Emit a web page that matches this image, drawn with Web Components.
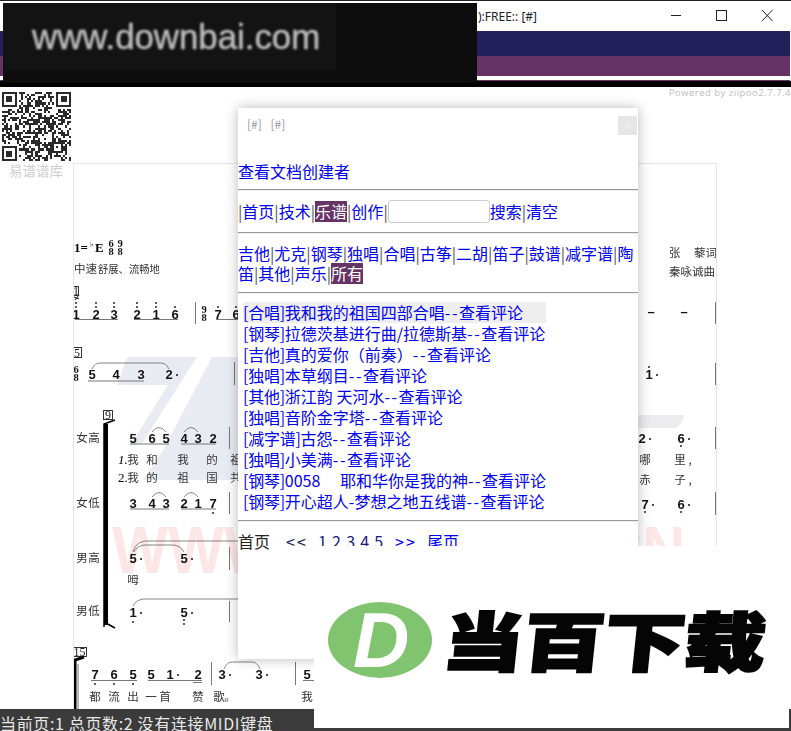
<!DOCTYPE html>
<html lang="zh">
<head>
<meta charset="utf-8">
<title>易谱</title>
<style>
  html,body{margin:0;padding:0;background:#fff;}
  body{font-family:"Noto Sans CJK SC","Noto Sans",sans-serif;}
</style>
</head>
<body>
<app-window>
  <song-dialog>
    <link-row style="height:21px;margin-bottom:7px" items="查看文档创建者"></link-row>
    <rule-line></rule-line>
    <link-row style="margin-top:10px;height:24px;margin-bottom:7px" items="|首页|技术|*乐谱|创作|@搜索|清空"><search-box></search-box></link-row>
    <rule-line></rule-line>
    <link-row style="margin-top:9px;height:40px;margin-bottom:9px" items="吉他|尤克|钢琴|独唱|合唱|古筝|二胡|笛子|鼓谱|减字谱|陶笛|其他|声乐|*所有"></link-row>
    <rule-line></rule-line>
    <song-list>
      <song-row kind="合唱" active>我和我的祖国四部合唱</song-row>
      <song-row kind="钢琴">拉德茨基进行曲/拉德斯基</song-row>
      <song-row kind="吉他">真的爱你（前奏）</song-row>
      <song-row kind="独唱">本草纲目</song-row>
      <song-row kind="其他">浙江韵 天河水</song-row>
      <song-row kind="独唱">音阶金字塔</song-row>
      <song-row kind="减字谱">古怨</song-row>
      <song-row kind="独唱">小美满</song-row>
      <song-row kind="钢琴">0058　&nbsp;耶和华你是我的神</song-row>
      <song-row kind="钢琴">开心超人-梦想之地五线谱</song-row>
    </song-list>
    <rule-line></rule-line>
    <pager-bar></pager-bar>
  </song-dialog>
</app-window>

<script>
const CJK = '"Noto Sans CJK SC","Noto Sans",sans-serif';

class TitleBar extends HTMLElement{
  constructor(){
    super();
    this.attachShadow({mode:"open"});
    this.shadowRoot.innerHTML = `
    <style>
      :host{display:flex;align-items:center;height:30px;border-top:1px solid #222;background:#fff;color:#222;
        font:12px "Noto Sans",sans-serif;padding-left:478px;box-sizing:content-box;}
      span{flex:1;}
      svg{display:block;margin-right:1px;}
    </style>
    <span>):FREE:: [#]</span>
    <svg width="120" height="30" viewBox="0 0 120 30" fill="none" stroke="#222" stroke-width="1">
      <path d="M1 14.5H11"/>
      <rect x="46.5" y="9.5" width="10" height="10"/>
      <path d="M92 9L102.500 20M102.500 9L92 20"/>
    </svg>`;
  }
}

class BlackBanner extends HTMLElement{
  constructor(){
    super();
    this.attachShadow({mode:"open"});
    this.shadowRoot.innerHTML = `
    <style>
      :host{position:absolute;left:3px;top:3px;width:474px;height:80px;background:#0d0d0d;overflow:hidden;}
      div{position:absolute;left:0;top:0;width:333px;height:68px;background:#131313;}
      span{position:absolute;left:29px;top:14px;font:34.800px/40px "Liberation Sans",sans-serif;color:#bdbdbd;-webkit-text-stroke:.5px #bdbdbd;filter:blur(.8px);white-space:nowrap;}
    </style>
    <div></div><span>www.downbai.com</span>`;
  }
}

class LogoBanner extends HTMLElement{
  constructor(){
    super();
    this.attachShadow({mode:"open"});
    this.shadowRoot.innerHTML = `
    <style>
      :host{position:absolute;left:314px;top:546px;width:475px;height:182px;background:#fff;}
      svg{display:block;}
    </style>
    <svg width="475" height="182" viewBox="314 546 475 182">
      <ellipse cx="380" cy="640" rx="52" ry="38" fill="#80c46f"/>
      <text x="353" y="667" font-family="Liberation Sans" font-weight="700" font-style="italic" font-size="78" fill="#fff">D</text>
      <text transform="translate(441 666) skewX(-6)" x="0" y="0" font-family='"Noto Sans CJK SC"' font-weight="900" font-size="64" fill="#050505" stroke="#050505" stroke-width="2.500" textLength="322" lengthAdjust="spacingAndGlyphs">当百下载</text>
    </svg>`;
  }
}

class QrCode extends HTMLElement{
  constructor(){
    super();
    this.attachShadow({mode:"open"});
    const size = 33;
    let cells = "";
    let seed = 7741;
    const next = () => { seed = (seed * 1103515245 + 12345) & 0x7fffffff; return (seed >> 16) & 1; };
    const inFinder = (x,y) => (x<8&&y<8)||(x>=size-8&&y<8)||(x<8&&y>=size-8);
    for(let y=0;y<size;y++){
      for(let x=0;x<size;x++){
        if(inFinder(x,y)) continue;
        if(x>=24&&x<=28&&y>=24&&y<=28) continue;
        if(next()) cells += `<rect x="${x}" y="${y}" width="1.020" height="1.020"/>`;
      }
    }
    const finder = (x,y) => `<path d="M${x} ${y}h7v7h-7zM${x+1} ${y+1}v5h5v-5z" fill-rule="evenodd"/><rect x="${x+2}" y="${y+2}" width="3" height="3"/>`;
    const align = `<path d="M24 24h5v5h-5zM25 25v3h3v-3z" fill-rule="evenodd"/><rect x="26" y="26" width="1" height="1"/>`;
    this.shadowRoot.innerHTML = `
    <style>
      :host{display:block;width:69px;height:69px;}
      svg{display:block;filter:blur(.25px);}
    </style>
    <svg width="69" height="69" viewBox="0 0 33 33" fill="#2a2a2a" shape-rendering="crispEdges">${cells}${finder(0,0)}${finder(26,0)}${finder(0,26)}${align}</svg>`;
  }
}

class SideColumn extends HTMLElement{
  constructor(){
    super();
    this.attachShadow({mode:"open"});
    this.shadowRoot.innerHTML = `
    <style>
      :host{display:block;flex:none;width:73px;box-sizing:border-box;padding:5px 0 0 2px;}
      p{margin:1px 0 0 7px;font:13.500px/16px ${CJK};color:#cfcfcf;white-space:nowrap;}
    </style>
    <qr-code></qr-code>
    <p>易谱谱库</p>`;
  }
}

class ScoreSheet extends HTMLElement{
  constructor(){
    super();
    this.attachShadow({mode:"open"});
    let s = "";
    const note = (x,y,d,o={}) => {
      s += `<text class="n" x="${x}" y="${y+4.500}">${d}</text>`;
      for(let i=0;i<(o.up||0);i++) s += `<circle cx="${x}" cy="${y-7-i*4}" r=".9"/>`;
      for(let i=0;i<(o.down||0);i++) s += `<circle cx="${x}" cy="${y+(o.under?10:8)+i*4}" r=".9"/>`;
      if(o.dot) s += `<circle cx="${x+8}" cy="${y+1}" r="1"/>`;
    };
    const bar = (x,a,b) => { s += `<path class="b" d="M${x} ${a}V${b}"/>`; };
    const under = (a,b,y) => { s += `<path class="u" d="M${a} ${y}H${b}"/>`; };
    const slur = (a,b,y,h) => { s += `<path class="s" d="M${a} ${y}C${a+3} ${y-h} ${a+6} ${y-h} ${a+10} ${y-h}H${b-10}C${b-6} ${y-h} ${b-3} ${y-h} ${b} ${y}"/>`; };
    const tiny = (a,b,y) => { s += `<path class="s" d="M${a} ${y}Q${(a+b)/2} ${y-9} ${b} ${y}"/>`; };
    const word = (x,y,t) => { s += `<text class="w" x="${x}" y="${y+4}">${t}</text>`; };
    const box = (x,y,w,h,t) => { s += `<rect class="k" x="${x+.5}" y="${y+.5}" width="${w}" height="${h}"/><text class="m" x="${x+w/2+.5}" y="${y+h-.5}">${t}</text>`; };
    const sig = (x,y,a,b) => { s += `<text class="g" x="${x}" y="${y-1}">${a}</text><text class="g" x="${x}" y="${y+7}">${b}</text>`; };

    // watermark, sits behind the notes
    s += `<path fill="#e9ebf3" d="M127 357H197L143 442L130 446L168 385H117ZM212 357H240V480H143L162 452Z"/>`;
    s += `<path fill="#ececef" d="M638 415H684Q683 423 676 428H638Z"/>`;
    s += `<text x="112" y="573" font-family="Liberation Sans" font-weight="700" font-size="67" fill="#fde6e6" textLength="573" lengthAdjust="spacingAndGlyphs">WWW.DOWNBAI.CN</text>`;

    // heading
    s += `<text x="74" y="252" font-family="Liberation Serif" font-weight="700" font-size="13">1=</text>`;
    s += `<text x="90" y="247" font-family="DejaVu Sans" font-size="8">♭</text>`;
    s += `<text x="95" y="252" font-family="Liberation Serif" font-weight="700" font-size="13">E</text>`;
    sig(111,248,"6","8"); sig(120,248,"9","8");
    s += `<text class="w" x="74" y="273" style="text-anchor:start">中速</text>`;
    s += `<text class="w" x="98" y="273" style="text-anchor:start;font-size:10.300px">舒展、流畅地</text>`;
    s += `<text class="w" x="669" y="257" style="text-anchor:start">张</text>`;
    s += `<text class="w" x="694" y="257" style="text-anchor:start">藜词</text>`;
    s += `<text class="w" x="669" y="276" style="text-anchor:start">秦咏诚曲</text>`;

    // line 1
    box(73,286,5,9,"1");
    s += `<path d="M75 300L79 295M74 297L79 299" stroke="#111" fill="none"/>`;
    note(76,314,"1",{up:2}); note(96,314,"2",{up:2}); note(114,314,"3",{up:2});
    note(137,314,"2",{up:2}); note(156,314,"1",{up:2}); note(175,314,"6",{up:1});
    under(75,118,319.500); under(134,178,319.500);
    bar(195.500,302,324);
    sig(204,314,"9","8");
    note(218,314,"7",{up:1}); note(236,314,"6",{up:1}); under(216,240,319.500);
    note(651,311,"–"); note(684,311,"–"); bar(715.500,302,324);

    // line 2
    box(72,347,9,10,"5");
    sig(76,374,"6","8");
    note(92,374,"5"); note(116,374,"4"); note(141,374,"3"); note(169,374,"2",{dot:1});
    under(88,144,381); slur(92,169,369,6);
    bar(234.500,362,385);
    note(649,374,"1",{up:1,dot:1}); bar(715.500,363,385);

    // line 3, four voices
    box(103,410,9,9,"9");
    s += `<path d="M104 627V424L115 420M104 622L115 628" stroke="#000" stroke-width="1.500" fill="none"/><rect x="104" y="424" width="4" height="201" fill="#000"/>`;
    [["女",82,438],["高",94,438],["女",82,503],["低",94,503],["男",82,558],["高",94,558],["男",82,611],["低",94,611]].forEach(l => word(l[1],l[2],l[0]));

    [[438,["5","6","5","4","3","2"],{}],[503,["3","4","3","2","1","7"],{}]].forEach(r => {
      [133,152,166,184,198,213].forEach((x,i) => note(x,r[0],r[1][i],(r[0]==503&&i==5)?{down:1,under:1}:{}));
      under(130,169,r[0]+6); under(181,216,r[0]+6);
      tiny(152,166,r[0]-6); tiny(184,198,r[0]-6);
      bar(229.500,r[0]-11,r[0]+11);
    });
    s += `<text x="118" y="464" font-family="Liberation Serif" font-style="italic" font-size="13">1.</text>`;
    s += `<text x="118" y="482" font-family="Liberation Serif" font-size="13">2.</text>`;
    [[133,"我"],[152,"和"],[183,"我"],[212,"的"],[236,"祖"]].forEach(w => word(w[0],460,w[1]));
    [[133,"我"],[152,"的"],[183,"祖"],[212,"国"],[236,"共"]].forEach(w => word(w[0],478,w[1]));

    note(133,558,"5",{dot:1}); note(184,558,"5",{dot:1});
    s += `<path class="s" d="M133 552C135 545 140 541 147 541H238"/>`;
    s += `<path class="s" d="M134 552C136 548 140 545 146 545H172C178 545 182 548 184 552"/>`;
    bar(229.500,547,570);
    word(133,580,"呣");
    note(133,612,"1",{down:1,under:1,dot:1}); note(184,612,"5",{down:2,dot:1});
    s += `<path class="s" d="M133 606C135 602 139 599 145 599H238"/>`;
    bar(229.500,601,622);

    // right of the dialog
    note(642,438,"2",{dot:1}); note(681,438,"6",{down:1,dot:1}); bar(715.500,427,449);
    word(645,460,"哪"); word(680,460,"里"); word(690,460,",");
    word(645,480,"赤"); word(680,480,"子"); word(690,480,",");
    note(645,504,"7",{down:1,dot:1}); note(681,504,"6",{down:1,dot:1}); bar(715.500,492,515);

    // line 4
    box(72,647,14,9,"15");
    s += `<path d="M75 709V660L84 657" stroke="#000" stroke-width="3" fill="none"/><path d="M78 664V709" stroke="#bbb" stroke-width="2"/>`;
    note(95,674,"7",{down:1,under:1}); note(114,674,"6",{down:1,under:1}); note(133,674,"5",{down:1,under:1});
    note(151,674,"5"); note(170,674,"1",{dot:1}); note(198,674,"2");
    under(91,137,680.500); under(148,202,680.500); under(193,202,682.500);
    bar(211.500,662,685);
    note(222,674,"3",{dot:1}); note(259,674,"3",{dot:1}); slur(224,260,669,7);
    bar(295.500,662,685);
    note(307,674,"5"); under(303,314,680.500);
    [[95,"都"],[114,"流"],[133,"出"],[151,"一"],[165,"首"],[198,"赞"],[219,"歌"],[230,"。"],[307,"我"]].forEach(w => word(w[0],697,w[1]));

    this.shadowRoot.innerHTML = `
    <style>
      :host{display:block;width:644px;height:546px;box-sizing:border-box;border:1px solid #e6e6e6;border-bottom:0;overflow:hidden;}
      svg{display:block;margin:-1px 0 0 -1px;filter:blur(.2px);}
      .n{font:700 13px "Liberation Sans",sans-serif;fill:#111;text-anchor:middle;}
      .w{font:11.500px ${CJK};fill:#333;text-anchor:middle;}
      .g{font:700 10.500px "Liberation Serif",serif;fill:#111;text-anchor:middle;}
      .m{font:12px "Liberation Serif",serif;fill:#222;text-anchor:middle;}
      .k{fill:#fff;stroke:#333;stroke-width:1;}
      .b{stroke:#777;stroke-width:1;fill:none;}
      .u{stroke:#777;stroke-width:1;fill:none;}
      .s{stroke:#666;stroke-width:.8;fill:none;}
      circle{fill:#111;}
    </style>
    <svg width="644" height="546" viewBox="73 163 644 546">${s}</svg>`;
  }
}

class SongDialog extends HTMLElement{
  constructor(){
    super();
    this.attachShadow({mode:"open"});
    this.shadowRoot.innerHTML = `
    <style>
      :host{position:absolute;left:238px;top:108px;width:400px;height:551px;background:#fff;
        box-shadow:0 0 12px rgba(0,0,0,.28);font:16px/21px ${CJK};color:#222;overflow:hidden;}
      header{display:flex;justify-content:space-between;height:53px;padding:8px 1px 0 9px;box-sizing:border-box;
        font:12px/16px ${CJK};color:#999;}
      header span{word-spacing:6px;}
      b{display:flex;align-items:center;justify-content:center;width:19px;height:19px;background:#e6e6e6;color:#eee;font:700 12px/19px "Liberation Sans",sans-serif;}
    </style>
    <header><span>[#] [#]</span><b>×</b></header>
    <slot></slot>`;
  }
}

class RuleLine extends HTMLElement{
  constructor(){
    super();
    this.attachShadow({mode:"open"});
    this.shadowRoot.innerHTML = `<style>:host{display:block;height:1px;background:#999;border-bottom:1px solid #eee;}</style>`;
  }
}

class LinkRow extends HTMLElement{
  connectedCallback(){
    if(this.shadowRoot) return;
    this.attachShadow({mode:"open"});
    const html = this.getAttribute("items").split("|").map(t => {
      let pre = "";
      if(t[0] == "@"){ pre = "<slot></slot>"; t = t.slice(1); }
      if(t == "") return pre;
      if(t[0] == "*") return pre + `<a class="on">${t.slice(1)}</a>`;
      return pre + `<a>${t}</a>`;
    }).join(`<i>|</i>`);
    this.shadowRoot.innerHTML = `
    <style>
      :host{display:block;font:16px/20px ${CJK};color:#0000ee;}
      a{color:#0000ee;}
      a.on{display:inline-block;height:21px;line-height:20px;background:#663366;color:#fff;vertical-align:top;}
      i{font-style:normal;color:#555;}
    </style>${html}`;
  }
}

class SearchBox extends HTMLElement{
  constructor(){
    super();
    this.attachShadow({mode:"open"});
    this.shadowRoot.innerHTML = `
    <style>
      :host{display:inline-block;vertical-align:middle;height:23px;margin:-5px 0 0 0;}
      input{display:block;width:102px;height:23px;box-sizing:border-box;border:1px solid #ccc;border-radius:3px;background:#fff;padding:0;margin:0;outline:0;}
    </style>
    <input type="text">`;
  }
}

class SongList extends HTMLElement{
  constructor(){
    super();
    this.attachShadow({mode:"open"});
    this.shadowRoot.innerHTML = `
    <style>:host{display:block;padding:8px 0 8px 5px;}</style>
    <slot></slot>`;
  }
}

class SongRow extends HTMLElement{
  connectedCallback(){
    if(this.shadowRoot) return;
    this.attachShadow({mode:"open"});
    this.shadowRoot.innerHTML = `
    <style>
      :host{display:block;width:max-content;height:21px;font:16px/21px ${CJK};color:#0000ee;white-space:nowrap;}
      :host([active]){background:#eeeeee;width:303px;}
      .k{letter-spacing:-.25px;}
      .d{letter-spacing:1.500px;}
    </style>
    <span class="k">[${this.getAttribute("kind")}]</span><slot></slot><span class="d">--</span>查看评论`;
  }
}

class PagerBar extends HTMLElement{
  constructor(){
    super();
    this.attachShadow({mode:"open"});
    this.shadowRoot.innerHTML = `
    <style>
      :host{display:flex;align-items:center;height:21px;margin-top:9px;font:16px/21px ${CJK};color:#0000ee;white-space:nowrap;}
      .a{color:#222;width:48px;}
      .b{color:#222255;width:32px;letter-spacing:2px;}
      .c{width:77px;letter-spacing:.8px;color:#1a1a80;}
      .d{width:32px;letter-spacing:2px;}
    </style>
    <span class="a">首页</span><span class="b">&lt;&lt;</span><span class="c">1 2 3 4 5</span><span class="d">&gt;&gt;</span><span>尾页</span>`;
  }
}

class StatusBar extends HTMLElement{
  constructor(){
    super();
    this.attachShadow({mode:"open"});
    this.shadowRoot.innerHTML = `
    <style>
      :host{display:block;flex:none;height:22px;background:#3b3b3b;color:#e8e8e8;font:16px/28px ${CJK};letter-spacing:.65px;overflow:hidden;white-space:nowrap;}
    </style>
    当前页:1 总页数:2 没有连接MIDI键盘`;
  }
}

class AppWindow extends HTMLElement{
  constructor(){
    super();
    this.attachShadow({mode:"open"});
    this.shadowRoot.innerHTML = `
    <style>
      :host{display:flex;flex-direction:column;position:relative;width:791px;height:731px;overflow:hidden;background:#fff;}
      .navy{height:25px;background:#21205c;margin-right:1px;}
      .plum{height:20px;background:#663366;margin-right:1px;}
      .gap{height:4px;background:#fff;border-bottom:1px solid #663366;margin-right:1px;}
      .edge{height:6px;background:#000;}
      main{flex:1;display:flex;min-height:0;}
      .right{flex:1;display:flex;flex-direction:column;min-width:0;}
      .powered{height:76px;box-sizing:border-box;text-align:right;font:9.500px/12px "Open Sans",sans-serif;letter-spacing:.5px;color:#bdbdbd;white-space:nowrap;overflow:hidden;}
    </style>
    <title-bar></title-bar>
    <div class="navy"></div><div class="plum"></div><div class="gap"></div><div class="edge"></div>
    <main>
      <side-column></side-column>
      <div class="right">
        <div class="powered">Powered by ziipoo2.7.7.4</div>
        <score-sheet></score-sheet>
      </div>
    </main>
    <status-bar></status-bar>
    <slot></slot>
    <black-banner></black-banner>
    <logo-banner></logo-banner>`;
  }
}

customElements.define("title-bar", TitleBar);
customElements.define("black-banner", BlackBanner);
customElements.define("logo-banner", LogoBanner);
customElements.define("qr-code", QrCode);
customElements.define("side-column", SideColumn);
customElements.define("score-sheet", ScoreSheet);
customElements.define("song-dialog", SongDialog);
customElements.define("rule-line", RuleLine);
customElements.define("link-row", LinkRow);
customElements.define("search-box", SearchBox);
customElements.define("song-list", SongList);
customElements.define("song-row", SongRow);
customElements.define("pager-bar", PagerBar);
customElements.define("status-bar", StatusBar);
customElements.define("app-window", AppWindow);
</script>
</body>
</html>
